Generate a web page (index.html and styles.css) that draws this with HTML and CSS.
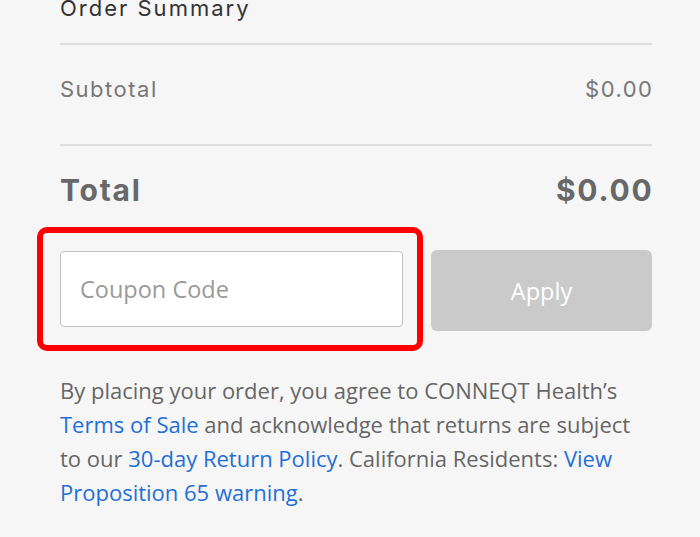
FILE: index.html
```html
<!DOCTYPE html>
<html lang="en">
<head>
<meta charset="utf-8">
<title>Order Summary</title>
<link rel="stylesheet" href="styles.css">
</head>
<body>
<main class="summary">
  <h2 class="title">Order Summary</h2>
  <div class="row subtotal">
    <span>Subtotal</span>
    <span>$0.00</span>
  </div>
  <div class="row total">
    <span>Total</span>
    <span>$0.00</span>
  </div>
  <form class="coupon">
    <div class="field">
      <input class="input" type="text" placeholder="Coupon Code">
      <span class="highlight"></span>
    </div>
    <button class="apply" type="button">Apply</button>
  </form>
  <p class="legal">By placing your order, you agree to CONNEQT Health’s <a href="#">Terms of Sale</a> and acknowledge that returns are subject to our <a href="#">30-day Return Policy</a>. California Residents: <a href="#">View Proposition 65 warning</a>.</p>
</main>
</body>
</html>
```
FILE: styles.css
```css
html, body {
  margin: 0;
  padding: 0;
  background: #f6f6f6;
}

.summary {
  width: 592px;
  margin: 0 0 0 60px;
  font-family: Inter, "Liberation Sans", sans-serif;
}

.title {
  margin: -7px 0 0;
  padding: 0 0 20px;
  font-size: 22px;
  line-height: 30px;
  font-weight: 400;
  letter-spacing: 2px;
  color: #333;
  border-bottom: 2px solid #dddddd;
}

.row {
  display: flex;
  justify-content: space-between;
  align-items: baseline;
}

.subtotal {
  padding: 29px 0 40px;
  font-size: 22px;
  line-height: 30px;
  letter-spacing: 1.5px;
  color: #777;
  border-bottom: 2px solid #dddddd;
}

.total {
  padding: 26px 0 0;
  font-size: 30px;
  line-height: 36px;
  font-weight: 700;
  letter-spacing: 1.8px;
  color: #686868;
}

.row span:last-child {
  margin-right: -1.5px;
}

.coupon {
  display: flex;
  align-items: flex-start;
  gap: 28px;
  margin: 42px 0 0;
}

.field {
  position: relative;
  flex: 0 0 343px;
  margin-top: 1px;
}

.input {
  box-sizing: border-box;
  display: block;
  width: 100%;
  height: 76px;
  margin: 0;
  padding: 0 19px;
  border: 1px solid #c2c2c2;
  border-radius: 4px;
  background: #fff;
  font-family: "Open Sans", sans-serif;
  font-size: 23.5px;
  color: #333;
  outline: none;
}

.input::placeholder {
  color: #9a9a9a;
}

.highlight {
  position: absolute;
  left: -23px;
  top: -24px;
  right: -20px;
  bottom: -24px;
  border: 6px solid #ff0000;
  border-radius: 10px;
  pointer-events: none;
}

.apply {
  flex: 1 1 auto;
  height: 81px;
  margin: 0;
  border: none;
  border-radius: 6px;
  background: #cacaca;
  color: #fff;
  font-family: "Open Sans", sans-serif;
  font-size: 23.5px;
}

.legal {
  margin: 42px 0 0;
  font-family: "Open Sans", sans-serif;
  font-size: 22px;
  line-height: 34px;
  color: #666;
}

.legal a {
  color: #1f6fd6;
  text-decoration: none;
}
```
